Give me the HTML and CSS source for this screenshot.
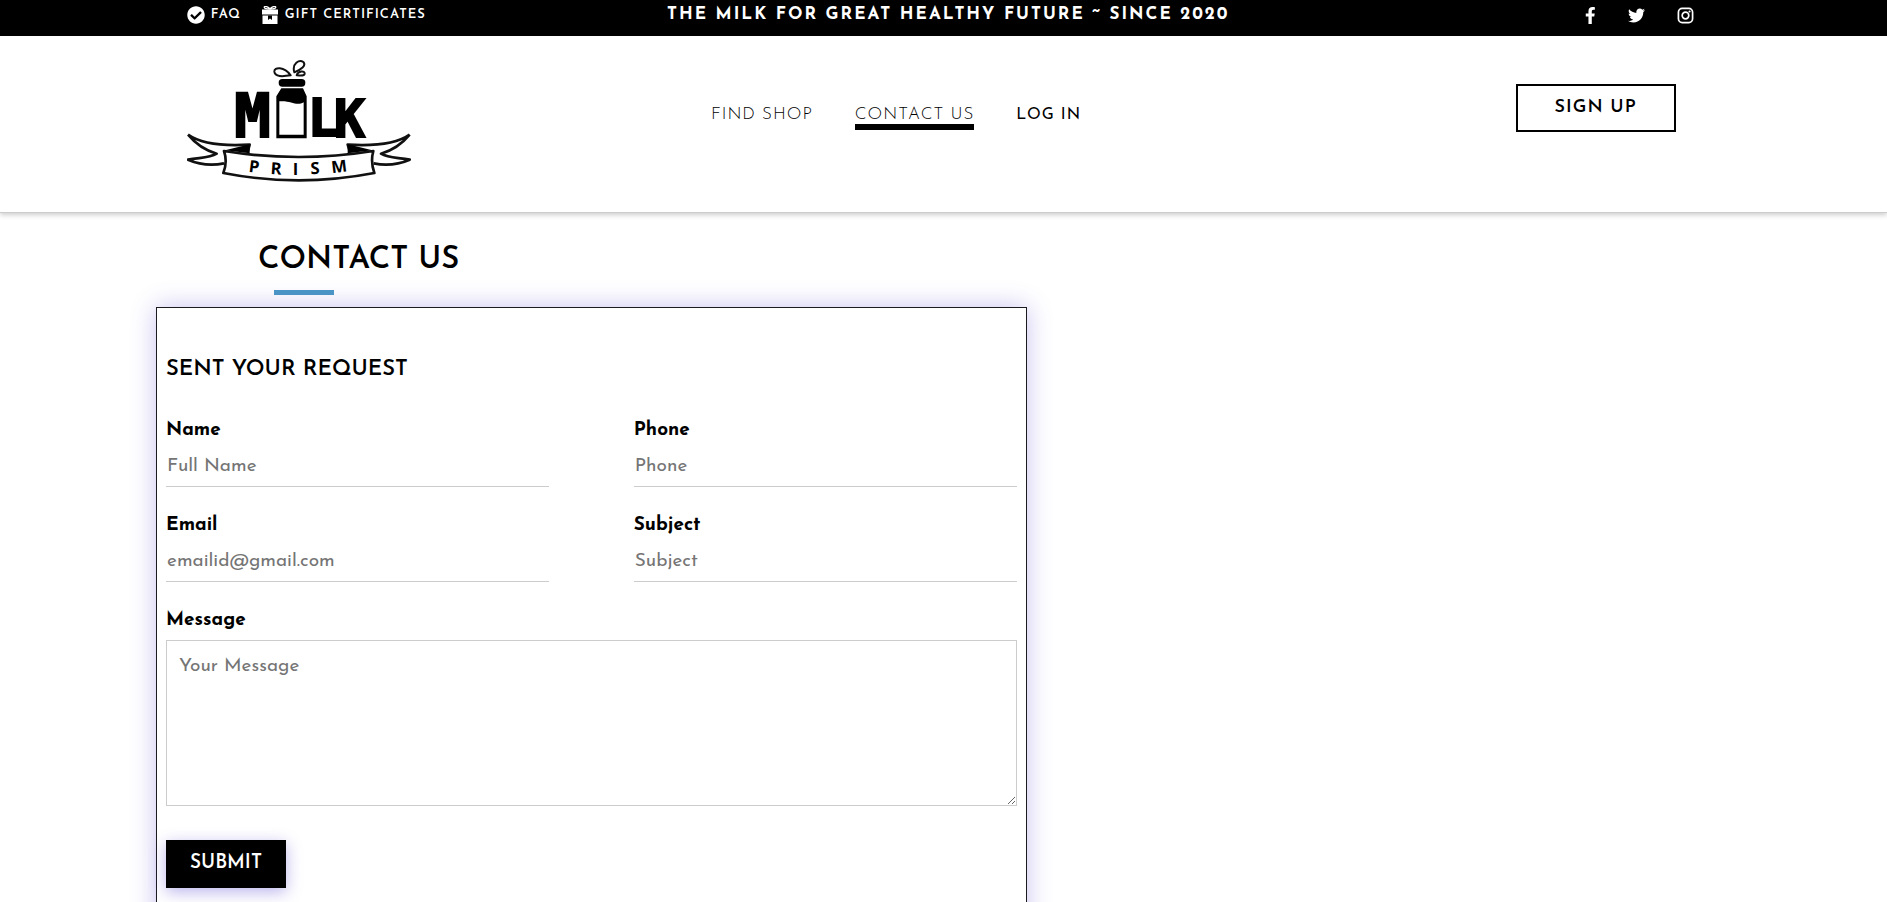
FILE: index.html
```html
<!DOCTYPE html>
<html lang="en">
<head>
<meta charset="utf-8">
<meta name="viewport" content="width=device-width, initial-scale=1">
<title>Milk Prism - Contact Us</title>
<link rel="stylesheet" href="styles.css">
</head>
<body>
<div class="topbar">
  <div class="topbar-links">
    <a href="#faq"><svg class="icon" viewBox="0 0 512 512" aria-hidden="true"><path d="M504 256c0 136.967-111.033 248-248 248S8 392.967 8 256 119.033 8 256 8s248 111.033 248 248zM227.314 387.314l184-184c6.248-6.248 6.248-16.379 0-22.627l-22.627-22.627c-6.248-6.249-16.379-6.249-22.628 0L216 308.118l-70.059-70.059c-6.248-6.248-16.379-6.248-22.628 0l-22.627 22.627c-6.248 6.248-6.248 16.379 0 22.627l104 104c6.249 6.249 16.379 6.249 22.628.001z"/></svg>FAQ</a>
    <a href="#gifts"><svg class="icon" viewBox="0 0 18 18" aria-hidden="true"><path d="M1 3.500h16v5H1zM1.500 9.500h15V18h-15z"/><path d="M9 3C6 3 3 2.600 3.200 1.200S7 .2 9 3C11 .2 14.600-.2 14.800 1.200S12 3 9 3" fill="none" stroke="#fff" stroke-width="1.300"/><path d="M7 9.500h4V14l-2-1.500L7 14z" fill="#000"/></svg>GIFT CERTIFICATES</a>
  </div>
  <p class="slogan">THE MILK FOR GREAT HEALTHY FUTURE ~ SINCE 2020</p>
  <div class="social">
    <a href="#facebook" aria-label="Facebook"><svg class="icon" viewBox="0 0 320 512"><path d="M279.140 288l14.220-92.660h-88.910v-60.130c0-25.350 12.420-50.060 52.240-50.060h40.420V6.260S260.430 0 225.360 0c-73.220 0-121.080 44.380-121.080 124.720v70.620H22.890V288h81.390v224h100.170V288z"/></svg></a>
    <a href="#twitter" aria-label="Twitter"><svg class="icon" viewBox="0 0 512 512"><path d="M459.370 151.716c.325 4.548.325 9.097.325 13.645 0 138.720-105.583 298.558-298.558 298.558-59.452 0-114.680-17.219-161.137-47.106 8.447.974 16.568 1.299 25.340 1.299 49.055 0 94.213-16.568 130.274-44.832-46.132-.975-84.792-31.188-98.112-72.772 6.498.974 12.995 1.624 19.818 1.624 9.421 0 18.843-1.300 27.614-3.573-48.081-9.747-84.143-51.980-84.143-102.985v-1.299c13.969 7.797 30.214 12.670 47.431 13.319-28.264-18.843-46.781-51.005-46.781-87.391 0-19.492 5.197-37.360 14.294-52.954 51.655 63.675 129.300 105.258 216.365 109.807-1.624-7.797-2.599-15.918-2.599-24.040 0-57.828 46.782-104.934 104.934-104.934 30.213 0 57.502 12.670 76.670 33.137 23.715-4.548 46.456-13.320 66.599-25.340-7.798 24.366-24.366 44.833-46.132 57.827 21.117-2.273 41.584-8.122 60.426-16.243-14.292 20.791-32.161 39.308-52.628 54.253z"/></svg></a>
    <a href="#instagram" aria-label="Instagram"><svg class="icon" viewBox="0 0 18 18"><rect x="1.500" y="1.500" width="15" height="15" rx="4" fill="none" stroke="#fff" stroke-width="1.800"/><circle cx="9" cy="9" r="3.500" fill="none" stroke="#fff" stroke-width="1.800"/><circle cx="13.300" cy="4.700" r="1.100"/></svg></a>
  </div>
</div>
<header class="header">
  <a class="logo" href="#home" aria-label="Milk Prism">
    <svg viewBox="54 45 672 366">
      <g fill="none" stroke="#111" stroke-width="6" stroke-linejoin="round">
        <path d="M365 91C345 63 315 66 316 80C318 96 340 95 365 91Z"/>
        <path d="M376 82C368 55 391 43 403 51C413 62 396 73 376 82Z"/>
        <path d="M383 91C387 77 408 76 407 86C405 95 394 91 383 91Z"/>
        <path stroke-width="8" d="M57 269C95 296 160 304 242 299L237 318M57 269C76 292 99 314 143 326C120 340 91 337 57 344C87 357 125 363 165 355"/>
        <path stroke-width="8" d="M722 269C684 296 620 304 536 299L542 318M722 269C703 292 680 314 636 326C659 340 688 337 722 344C692 357 654 363 614 355"/>
        <path stroke-width="8" d="M165 318Q389 354 613 318Q604 350 616 384Q389 428 163 384Q176 350 165 318Z" fill="#fff"/>
      </g>
      <path d="M168 316L242 298V325ZM610 316L536 298V325Z"/>
      <rect x="329" y="102" width="80" height="23" rx="11"/>
      <path d="M337 130H402L413 154V280H322V154ZM331 169V269H404V172C381 185 365 165 331 169Z" fill-rule="evenodd"/>
      <text class="logo-name" x="196" y="276">M</text>
      <text class="logo-name small" x="416" y="272">L</text>
      <text class="logo-name small" x="495" y="275">K</text>
      <g class="logo-ribbon">
        <text x="238" y="380" transform="rotate(7 238 380)">P</text>
        <text x="304" y="387" transform="rotate(4 304 387)">R</text>
        <text x="371" y="390">I</text>
        <text x="425" y="388" transform="rotate(-3 425 388)">S</text>
        <text x="489" y="385" transform="rotate(-7 489 385)">M</text>
      </g>
    </svg>
  </a>
  <nav class="nav">
    <a href="#shop">FIND SHOP</a>
    <a class="active" href="#contact">CONTACT US</a>
    <a class="login" href="#login">LOG IN</a>
  </nav>
  <button class="signup" type="button">SIGN UP</button>
</header>
<main class="main">
  <h1 class="title">CONTACT US</h1>
  <form class="card">
    <h2 class="card-title">SENT YOUR REQUEST</h2>
    <div class="fields">
      <div class="field"><label for="name">Name</label><input id="name" type="text" placeholder="Full Name"></div>
      <div class="field"><label for="phone">Phone</label><input id="phone" type="tel" placeholder="Phone"></div>
      <div class="field"><label for="email">Email</label><input id="email" type="email" placeholder="emailid@gmail.com"></div>
      <div class="field"><label for="subject">Subject</label><input id="subject" type="text" placeholder="Subject"></div>
      <div class="field wide"><label for="message">Message</label><textarea id="message" placeholder="Your Message"></textarea></div>
    </div>
    <button class="submit" type="submit">SUBMIT</button>
  </form>
</main>
</body>
</html>
```
FILE: styles.css
```css
* { box-sizing: border-box; }

body {
  margin: 0;
  background: #fff;
  color: #000;
  font-family: "Josefin Sans", Lato, sans-serif;
}

a { color: inherit; text-decoration: none; }

h1, h2, p { margin: 0; }

button, input, textarea { font-family: inherit; color: inherit; }

.topbar {
  display: grid;
  grid-template-columns: 1fr auto 1fr;
  align-items: center;
  height: 36px;
  padding: 0 9.4% 6px 9.9%;
  background: #000;
  color: #fff;
}

.topbar-links { display: flex; gap: 20px; }

.topbar-links a {
  display: flex;
  align-items: center;
  gap: 6px;
  font-size: 13px;
  line-height: 18px;
  font-weight: 600;
  letter-spacing: 1px;
}

.icon { display: block; height: 18px; fill: #fff; }

.slogan { font-size: 17px; font-weight: 700; line-height: 18px; letter-spacing: 2px; }

.social { display: flex; justify-content: flex-end; gap: 32px; padding-right: 16px; }

.social .icon { height: 17px; }

.header {
  display: grid;
  grid-template-columns: 35.2% auto 1fr;
  align-items: start;
  padding: 24px 11.2% 30px 9.9%;
  border-bottom: 1px solid #ccc;
  box-shadow: 0 2px 5px rgba(0, 0, 0, 0.2);
}

.logo { display: block; width: fit-content; }

.logo svg { display: block; width: 224px; }

.logo-name {
  font-family: "DejaVu Sans Mono", monospace;
  font-size: 182px;
  font-weight: 700;
  stroke: #000;
  stroke-width: 6px;
}

.logo-name.small { font-size: 155px; }

.logo-ribbon {
  font-family: "Open Sans", sans-serif;
  font-size: 50px;
  font-weight: 700;
}

.nav {
  display: flex;
  gap: 42px;
  margin-top: 46px;
  font-size: 17px;
  font-weight: 300;
  line-height: 18px;
  letter-spacing: 1px;
}

.nav .active { border-bottom: 6px solid #000; }

.nav .login { font-size: 16px; font-weight: 400; }

.signup {
  justify-self: end;
  width: 160px;
  height: 48px;
  margin-top: 24px;
  padding: 0;
  border: 2px solid #000;
  background: #fff;
  font-size: 18px;
  font-weight: 600;
  letter-spacing: 1px;
}

.main { padding: 28px 45.6% 0 156px; }

.title {
  width: fit-content;
  margin-left: 102px;
  font-size: 31px;
  font-weight: 600;
  line-height: 40px;
}

.title::after {
  content: "";
  display: block;
  width: 60px;
  height: 5px;
  margin: 9px 0 12px 16px;
  background: #4a98c5;
}

.card {
  padding: 47px 9px 50px;
  border: 1px solid #1a1a1f;
  background: #fff;
  box-shadow: 0 0 24px rgba(83, 64, 208, 0.32);
}

.card-title { font-size: 22px; font-weight: 600; line-height: 30px; }

.fields {
  display: grid;
  grid-template-columns: 1fr 1fr;
  gap: 24px 85px;
  margin-top: 31px;
}

.field { display: flex; flex-direction: column; }

.wide { grid-column: 1 / -1; }

label { font-size: 19px; font-weight: 700; line-height: 30px; }

input {
  height: 41px;
  padding: 0 1px;
  border: 0;
  border-bottom: 1px solid #ccc;
  font-size: 19px;
}

textarea {
  height: 166px;
  margin-top: 4px;
  padding: 16px 12px;
  border: 1px solid #ccc;
  font-size: 19px;
  resize: both;
}

::placeholder { color: #757575; }

.submit {
  width: 120px;
  height: 48px;
  margin-top: 34px;
  padding: 0 0 1px;
  border: 0;
  background: #000;
  color: #fff;
  font-size: 19px;
  font-weight: 600;
  box-shadow: 0 4px 16px rgba(83, 64, 208, 0.4);
}
```
